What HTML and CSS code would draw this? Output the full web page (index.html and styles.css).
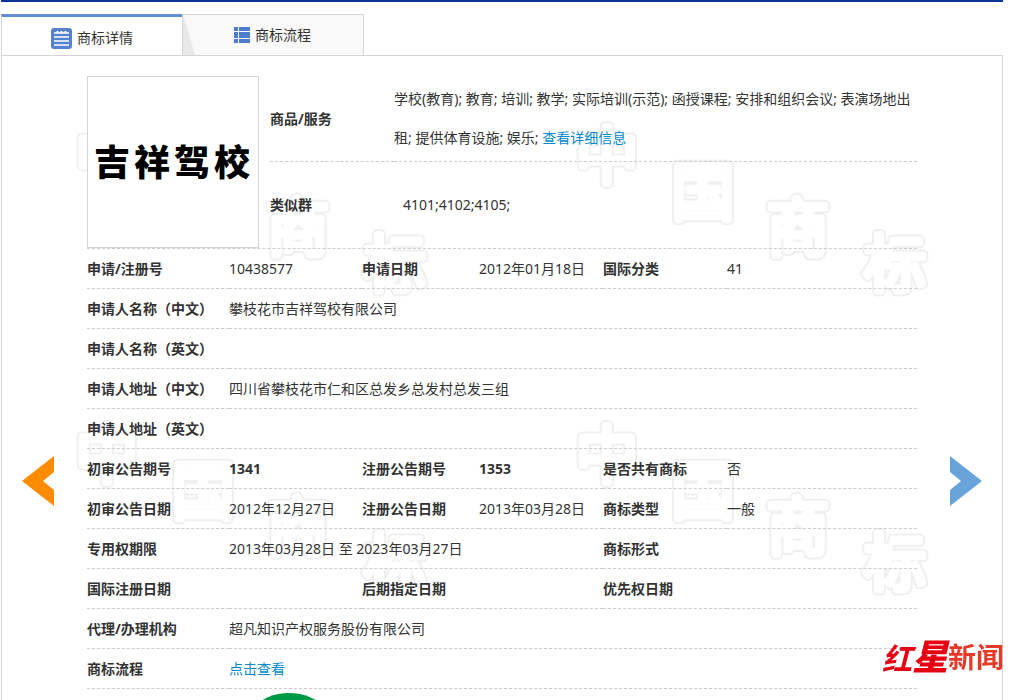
FILE: index.html
```html
<!DOCTYPE html>
<html lang="zh-CN">
<head>
    <meta charset="UTF-8">
    <meta name="viewport" content="width=device-width, initial-scale=1.0">
    <title>商标详情</title>
    <link rel="stylesheet" href="styles.css">
</head>
<body>
    <div class="page">
        <nav class="tabs">
            <a class="tab active" href="#detail">
                <svg width="21" height="21" viewBox="0 0 21 21">
                    <rect width="21" height="21" rx="3" fill="#5581cf"/>
                    <path d="M3 5h15M3 9h15M3 13h15M3 17h15" stroke="#fff" stroke-width="1.6"/>
                    <path d="M6.5 3v2M10.5 3v2M14.5 3v2" stroke="#fff" stroke-width="2"/>
                </svg>
                <span>商标详情</span>
            </a>
            <a class="tab" href="#flow">
                <svg width="16" height="16" viewBox="0 0 16 16" fill="#4d7bcd">
                    <path d="M0 0h4v4H0zM5 0h11v4H5zM0 5h4v6H0zM5 5h11v6H5zM0 12h4v4H0zM5 12h11v4H5z"/>
                </svg>
                <span>商标流程</span>
            </a>
        </nav>
        <main class="panel" id="detail">
            <svg class="watermark" aria-hidden="true">
                <defs>
                    <g id="mark">
                        <text x="105" y="123">中</text>
                        <text x="201" y="159">国</text>
                        <text x="296" y="195">商</text>
                        <text x="393" y="231">标</text>
                    </g>
                    <pattern id="tile" width="500" height="299" patternUnits="userSpaceOnUse">
                        <use class="mark-outer" href="#mark"/>
                        <use class="mark-inner" href="#mark"/>
                    </pattern>
                </defs>
                <rect width="100%" height="598" fill="url(#tile)"/>
            </svg>
            <a class="arrow" href="#prev" aria-label="上一个">
                <svg width="32" height="50" viewBox="0 0 32 50"><path d="M32 0L0 25l32 25V34L21 25l11-9z" fill="#ff8c00"/></svg>
            </a>
            <div class="content">
                <div class="summary">
                    <div class="brand"><span>吉</span><span>祥</span><span>驾</span><span>校</span></div>
                    <table class="goods">
                        <tr>
                            <th>商品/服务</th>
                            <td>学校(教育); 教育; 培训; 教学; 实际培训(示范); 函授课程; 安排和组织会议; 表演场地出租; 提供体育设施; 娱乐; <a href="#goods">查看详细信息</a></td>
                        </tr>
                        <tr>
                            <th>类似群</th>
                            <td class="group">4101;4102;4105;</td>
                        </tr>
                    </table>
                </div>
                <table class="info">
                    <colgroup>
                        <col class="c1"><col class="c2"><col class="c3"><col class="c4"><col class="c5"><col>
                    </colgroup>
                    <tr>
                        <th>申请/注册号</th><td>10438577</td>
                        <th>申请日期</th><td>2012年01月18日</td>
                        <th>国际分类</th><td>41</td>
                    </tr>
                    <tr><th>申请人名称（中文）</th><td colspan="5">攀枝花市吉祥驾校有限公司</td></tr>
                    <tr><th>申请人名称（英文）</th><td colspan="5"></td></tr>
                    <tr><th>申请人地址（中文）</th><td colspan="5">四川省攀枝花市仁和区总发乡总发村总发三组</td></tr>
                    <tr><th>申请人地址（英文）</th><td colspan="5"></td></tr>
                    <tr>
                        <th>初审公告期号</th><td><b>1341</b></td>
                        <th>注册公告期号</th><td><b>1353</b></td>
                        <th>是否共有商标</th><td>否</td>
                    </tr>
                    <tr>
                        <th>初审公告日期</th><td>2012年12月27日</td>
                        <th>注册公告日期</th><td>2013年03月28日</td>
                        <th>商标类型</th><td>一般</td>
                    </tr>
                    <tr>
                        <th>专用权期限</th><td colspan="3">2013年03月28日 至 2023年03月27日</td>
                        <th>商标形式</th><td></td>
                    </tr>
                    <tr>
                        <th>国际注册日期</th><td></td>
                        <th>后期指定日期</th><td></td>
                        <th>优先权日期</th><td></td>
                    </tr>
                    <tr><th>代理/办理机构</th><td colspan="5">超凡知识产权服务股份有限公司</td></tr>
                    <tr><th>商标流程</th><td colspan="5"><a href="#flow">点击查看</a></td></tr>
                </table>
                <div class="stamp"></div>
            </div>
            <a class="arrow" href="#next" aria-label="下一个">
                <svg width="32" height="50" viewBox="0 0 32 50"><path d="M0 0l32 25L0 50V34l11-9L0 16z" fill="#68a4da"/></svg>
            </a>
        </main>
    </div>
    <div class="news"><em>红<b>星</b></em><span>新闻</span></div>
</body>
</html>
```
FILE: styles.css
```css
* {
    box-sizing: border-box;
}
body {
    margin: 0;
    background: #fff;
    color: #333;
    font: 14px/20px "Noto Sans", "Noto Sans CJK SC", sans-serif;
}
a {
    color: #0088cc;
    text-decoration: none;
}
.page {
    margin: 0 12px 0 1px;
    border-top: 2px solid #0f3399;
}
.tabs {
    display: flex;
    margin-top: 12px;
}
.tab {
    display: flex;
    align-items: center;
    gap: 5px;
    width: 182px;
    height: 41px;
    padding-left: 51px;
    border: 1px solid #d4d4d4;
    border-bottom: none;
    background: linear-gradient(74deg, #e9e9e9 11px, #f9f9f9 12px);
    color: #333;
}
.tab.active {
    width: 181px;
    padding: 4px 0 0 49px;
    border-top: 3px solid #628cd4;
    border-right: none;
    background: #fff;
}
.panel {
    position: relative;
    display: flex;
    justify-content: space-between;
    border: 1px solid #d4d4d4;
    padding: 20px 20px 0;
}
.watermark {
    position: absolute;
    top: 0;
    left: 0;
    width: 100%;
    height: 100%;
    z-index: -1;
}
.watermark text {
    font: 300 62px "Noto Sans CJK SC", sans-serif;
    text-anchor: middle;
}
.mark-outer {
    fill: #f0f0f0;
    stroke: #f0f0f0;
    stroke-width: 11px;
    stroke-linejoin: round;
}
.mark-inner {
    fill: #fff;
    stroke: #fff;
    stroke-width: 7px;
    stroke-linejoin: round;
}
.arrow {
    padding-top: 380px;
}
.arrow svg {
    display: block;
}
.content {
    flex: 1;
    margin: 0 33px;
}
.summary {
    display: flex;
    gap: 11px;
    border-bottom: 1px dashed #ccc;
}
.brand {
    display: flex;
    align-items: center;
    justify-content: center;
    gap: 4px;
    width: 172px;
    height: 172px;
    padding: 0 2px 4px 0;
    border: 1px solid #d4d4d4;
    background: #fff;
    color: #000;
    font: 900 36px "Noto Sans CJK SC", sans-serif;
}
table {
    border-spacing: 0;
}
th, td {
    padding: 0;
    text-align: left;
}
.goods {
    flex: 1;
}
.goods th {
    width: 124px;
}
.goods td {
    height: 86px;
    line-height: 39px;
}
.goods tr:first-child > * {
    border-bottom: 1px dashed #ccc;
}
.goods tr:first-child td {
    padding-bottom: 2px;
}
.goods .group {
    padding: 0 0 2px 9px;
}
.info {
    width: 100%;
    table-layout: fixed;
}
.info th, .info td {
    height: 40px;
    border-bottom: 1px dashed #ccc;
}
.c1 {
    width: 142px;
}
.c2 {
    width: 133px;
}
.c3 {
    width: 117px;
}
.c4, .c5 {
    width: 124px;
}
.stamp {
    width: 110px;
    height: 110px;
    margin: 4px 0 0 147px;
    border-radius: 50%;
    background: #009944;
}
.news {
    position: fixed;
    right: 11px;
    bottom: 20px;
    display: flex;
    align-items: center;
    color: #e83828;
    font: 700 28px/46px "Noto Sans CJK SC", sans-serif;
}
.news em {
    color: #e60012;
    font-size: 30px;
}
.news b {
    font-size: 36px;
}
```
